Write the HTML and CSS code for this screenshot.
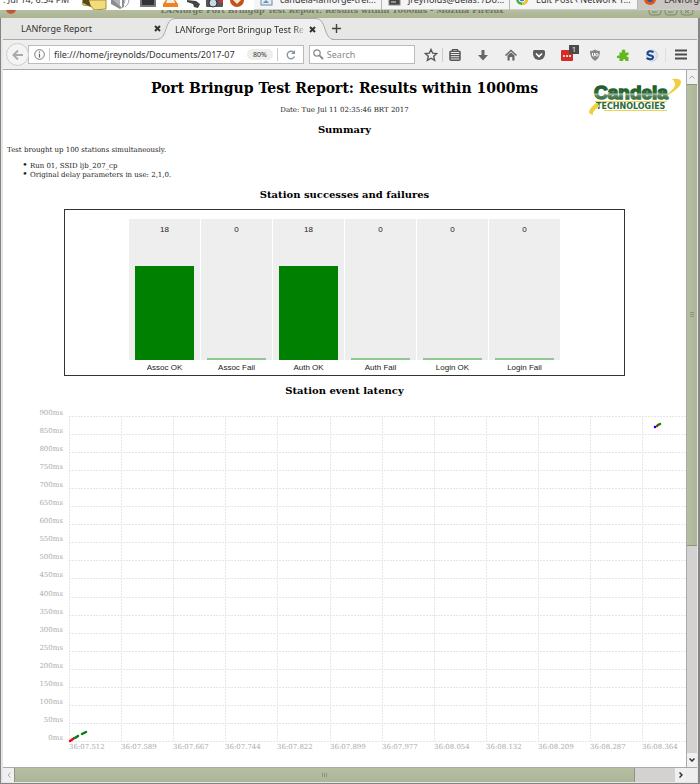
FILE: index.html
```
<!doctype html>
<html lang="en">
	<head>
		<meta charset="utf-8">
		<title>LANforge Port Bringup Test Report</title>
		<link rel="stylesheet" href="styles.css">
	</head>
	<body>

		<div class="panel">
			<div class="clock">: Jul 14, 6:54 PM</div>
			<svg class="tray" width="172" height="10" viewBox="82 0 172 10">
				<path d="M82 0h24v9l-12 1-3-4-8-1z" fill="#f2dc7c" stroke="#a58d3a"/>
				<path d="M83 0v3l8 4-2-7z" fill="#5b4a1c"/>
				<path d="M111 0h4l7 8V0h2v7l-4 2-9-5z" fill="#8c8c8c"/>
				<path d="M113 0h7v6z" fill="#b5b5b5"/>
				<path d="M125 7q4-3 4-7M123 5q2-2 2-5" fill="none" stroke="#93a3b5"/>
				<rect x="140" y="-4" width="16" height="11" rx="1" fill="#777"/>
				<rect x="142" y="-3" width="12" height="8" fill="#303438"/>
				<path d="M166 0h9l3 4v3H163V4z" fill="#f08020"/>
				<path d="M167 0h7l1 3h-9z" fill="#eee"/>
				<path d="M187 0l9 1 4 3-2 4-4-1-1-3-6-2z" fill="#444"/>
				<rect x="206" y="-3" width="17" height="10" rx="1" fill="#555"/>
				<circle cx="213" cy="3" r="4" fill="#c8d8e8" stroke="#333"/>
				<path d="M219 0h4v3h-4z" fill="#c33"/>
				<circle cx="237" cy="0" r="7" fill="#c4501c"/>
				<path d="M233 0l4 4 4-4z" fill="#f4e6d0"/>
			</svg>
			<div class="tasks">
				<button class="task">
					<svg width="14" height="10" viewBox="0 0 14 10"><rect x="1" y="-4" width="11" height="9" fill="#e3edf6" stroke="#6d8bac"/><path d="M3 3l3-3 3 3z" fill="#6d8bac"/></svg>
					<span>candela-lanforge-trel...</span>
				</button>
				<button class="task">
					<svg width="14" height="10" viewBox="0 0 14 10"><rect x="1" y="-4" width="11" height="9" fill="#444" stroke="#888"/><path d="M3 2h5" stroke="#ddd"/></svg>
					<span>jreynolds@delas: /Do...</span>
				</button>
				<button class="task">
					<svg width="14" height="10" viewBox="0 0 14 10"><circle cx="6" cy="-1" r="6" fill="#4cae4f"/><path d="M6-1l6 0a6 6 0 0 1-6 6z" fill="#f4c430"/><circle cx="6" cy="-1" r="3" fill="#3f7fd0" stroke="#fff"/></svg>
					<span>Edit Post ‹ Network T...</span>
				</button>
				<button class="task task-active">
					<svg width="14" height="10" viewBox="0 0 14 10"><circle cx="6" cy="-1" r="6" fill="#d9581c"/><circle cx="6" cy="-1" r="3" fill="#33509c"/></svg>
					<span>LANforge Port</span>
				</button>
			</div>
		</div>

		<div class="titlebar">
			<svg class="title-icon" width="10" height="8" viewBox="0 0 10 8"><circle cx="5" cy="-1" r="5" fill="#d2562a"/><circle cx="5" cy="-2" r="3" fill="#7f5b74"/></svg>
			<div class="title-text">LANforge Port Bringup Test Report: Results within 1000ms - Mozilla Firefox</div>
			<svg class="title-controls" width="48" height="8" viewBox="0 0 48 8" fill="none" stroke="#7f8870">
				<path d="M1 0v2q0 3 3 3h6q3 0 3-3V0M17 0v2q0 3 3 3h6q3 0 3-3V0M33 0v2q0 3 3 3h6q3 0 3-3V0"/>
				<path d="M4 2h5M20 2h5M37 0l4 3M41 0l-4 3"/>
			</svg>
		</div>

		<div class="window">
			<div class="tabs">
				<div class="tab">
					<span class="tab-title">LANforge Report</span>
					<button class="tab-close" aria-label="Close tab"><svg width="7" height="7" viewBox="0 0 7 7"><path d="M1 1l5 5M6 1L1 6"/></svg></button>
				</div>
				<svg class="tab-edge" width="18" height="22" viewBox="0 0 18 22"><path d="M0 21.5C11 21.5 7 .5 18 .5V22H0z" fill="#efefef"/><path d="M0 21.5C11 21.5 7 .5 18 .5" fill="none" stroke="#aaa"/></svg>
				<div class="tab tab-active">
					<span class="tab-title">LANforge Port Bringup Test Report</span>
					<button class="tab-close" aria-label="Close tab"><svg width="7" height="7" viewBox="0 0 7 7"><path d="M1 1l5 5M6 1L1 6"/></svg></button>
				</div>
				<svg width="18" height="22" viewBox="0 0 18 22"><path d="M0 .5C11 .5 7 21.5 18 21.5V22H0z" fill="#efefef"/><path d="M0 .5C11 .5 7 21.5 18 21.5" fill="none" stroke="#aaa"/></svg>
				<div class="tab-rest">
					<button class="tab-new" aria-label="New tab"><svg width="9" height="9" viewBox="0 0 9 9"><path d="M4.5 0v9M0 4.5h9" stroke="#444" stroke-width="1.4"/></svg></button>
				</div>
			</div>

			<div class="toolbar">
				<button class="back" aria-label="Back"><svg width="12" height="12" viewBox="0 0 12 12"><path d="M11 6H2M6 1.5L1.5 6 6 10.5" fill="none" stroke="#aaa" stroke-width="2"/></svg></button>
				<div class="field url">
					<svg width="11" height="11" viewBox="0 0 11 11"><circle cx="5.5" cy="5.5" r="4.8" fill="none" stroke="#777"/><path d="M5.5 2.4v1.4M5.5 4.8v3.6" stroke="#666" stroke-width="1.2"/></svg>
					<span class="divider"></span>
					<input type="text" aria-label="Address" value="file:///home/jreynolds/Documents/2017-07">
					<span class="zoom-level">80%</span>
					<span class="divider"></span>
					<button class="reload" aria-label="Reload"><svg width="10" height="10" viewBox="0 0 10 10"><path d="M8.5 6.5A3.8 3.8 0 1 1 7.7 2.3" fill="none" stroke="#8795ab" stroke-width="1.4"/><path d="M9 0v4H5z" fill="#8795ab"/></svg></button>
				</div>
				<div class="field search">
					<svg width="11" height="11" viewBox="0 0 11 11"><circle cx="4" cy="4" r="3.2" fill="none" stroke="#888" stroke-width="1.2"/><path d="M6.4 6.4L10 10" stroke="#888" stroke-width="1.8"/></svg>
					<input type="text" aria-label="Search" placeholder="Search">
				</div>
				<button class="bookmark" aria-label="Bookmark"><svg width="14" height="14" viewBox="0 0 14 14"><path d="M7 1.5l1.7 3.7 4 .4-3 2.700.9 4L7 10.200l-3.600 2.100.9-4-3-2.700 4-.4z" fill="none" stroke="#555" stroke-width="1.4"/></svg></button>
				<div class="tools">
					<button aria-label="Bookmarks list"><svg width="14" height="14" viewBox="0 0 14 14"><path d="M4.500 3V1.500h5V3" fill="none" stroke="#555" stroke-width="1.2"/><rect x="2" y="3.200" width="10" height="9" rx="1" fill="none" stroke="#555" stroke-width="1.500"/><path d="M2 5.500h10M2 7.700h10M2 9.900h10" stroke="#555" stroke-width="1.200"/></svg></button>
					<button aria-label="Downloads"><svg width="14" height="14" viewBox="0 0 14 14"><path d="M5.500 2h3v5H12l-5 5.500L2 7h3.500z" fill="#666"/></svg></button>
					<button aria-label="Home"><svg width="14" height="14" viewBox="0 0 14 14"><path d="M1.500 7.500L7 2.500l5.500 5" fill="none" stroke="#666" stroke-width="1.500"/><path d="M3.500 7.500L7 4.500l3.500 3v5H8.300V9H5.700v3.500H3.500z" fill="#666"/></svg></button>
					<button aria-label="Pocket"><svg width="14" height="14" viewBox="0 0 14 14"><path d="M1 3.500q0-1.500 1.500-1.500h9Q13 2 13 3.500V6a6 6 0 0 1-12 0z" fill="#5c5c5c"/><path d="M4 5.500l3 3 3-3" fill="none" stroke="#fff" stroke-width="1.700"/></svg></button>
					<button class="with-badge" aria-label="Passwords"><svg width="14" height="14" viewBox="0 0 14 14"><rect x="1" y="2" width="12" height="11" rx="1" fill="#d32d27"/><path d="M3 8h2M6 8h2M9 8h2" stroke="#fff" stroke-width="1.500"/></svg><span class="badge">1</span></button>
					<button aria-label="Blocker"><svg width="14" height="14" viewBox="0 0 14 14"><path d="M7 1.500q2.500 1.500 5 1.500 0 7.500-5 10Q2 10.500 2 3q2.500 0 5-1.500z" fill="#888"/><path d="M4.500 5v2q0 1.200 1 1.200t1-1.200V5" fill="none" stroke="#fff"/><circle cx="8.800" cy="6.800" r="1.300" fill="none" stroke="#fff"/></svg></button>
					<button aria-label="Add-ons"><svg width="14" height="14" viewBox="0 0 14 14"><path d="M6 4.500Q4.800 1.500 7.500 1.500T9 4.500h3.500V7q-2 0-2 1t2 1v4H9.500q-.2-2-1.300-2T7 13H3.500v-3Q1 11 .8 9T3.500 7.500v-3z" fill="#63b71f"/></svg></button>
					<button aria-label="Skype"><svg width="14" height="14" viewBox="0 0 14 14"><circle cx="8" cy="7.500" r="5.500" fill="#dfe5ec" stroke="#c2cad4"/><path d="M9.500 4.300Q8.500 3 6 3.200 3.500 3.500 3.500 5.200T6.500 7.400 9 9.600 6 11.200 2.800 9.800" fill="none" stroke="#17468f" stroke-width="2"/></svg></button>
				</div>
				<button class="menu" aria-label="Menu"><svg width="12" height="11" viewBox="0 0 12 11"><path d="M0 1.500h12M0 5.500h12M0 9.500h12" stroke="#4c4c4c" stroke-width="2"/></svg></button>
			</div>

			<div class="view">
				<div class="view-row">
					<div class="report">
						<div class="report-head">
							<div class="report-title">
								<h1>Port Bringup Test Report: Results within 1000ms</h1>
								<div class="date">Date: Tue Jul 11 02:35:46 BRT 2017</div>
								<h2>Summary</h2>
							</div>
							<svg class="logo" width="94" height="38" viewBox="0 0 94 38">
								<defs>
									<linearGradient id="green" x1="0" y1="0" x2="0" y2="1">
										<stop offset="0" stop-color="#1c5226"/>
										<stop offset=".5" stop-color="#2a6a35"/>
										<stop offset=".58" stop-color="#9cba9e"/>
										<stop offset=".66" stop-color="#55855a"/>
										<stop offset="1" stop-color="#1c5226"/>
									</linearGradient>
								</defs>
								<path d="M84 1q9-1 9 3 0 7-22 18 17-11 16-16 0-3-3-5z" fill="#efd03c"/>
								<text x="6" y="21" class="logo-name" fill="url(#green)" stroke="url(#green)">Candela</text>
								<path d="M7 23.500h72M16 32.500h63" stroke="#ecd25a"/>
								<text x="8" y="31" class="logo-sub">TECHNOLOGIES</text>
								<path d="M8 25q-7 6-7 9 0 2 4 3-2-3 7-9z" fill="#efd03c"/>
							</svg>
						</div>

						<p>Test brought up 100 stations simultaneously.</p>
						<ul>
							<li>Run 01, SSID ljb_207_cp</li>
							<li>Original delay parameters in use: 2,1,0.</li>
						</ul>

						<h2>Station successes and failures</h2>
						<div class="bars">
							<div class="bar-col"><div class="bar-area"><span>18</span><div class="bar" style="height: 68%"></div></div><div>Assoc OK</div></div>
							<div class="bar-col"><div class="bar-area"><span>0</span><div class="bar bar-zero"></div></div><div>Assoc Fail</div></div>
							<div class="bar-col"><div class="bar-area"><span>18</span><div class="bar" style="height: 68%"></div></div><div>Auth OK</div></div>
							<div class="bar-col"><div class="bar-area"><span>0</span><div class="bar bar-zero"></div></div><div>Auth Fail</div></div>
							<div class="bar-col"><div class="bar-area"><span>0</span><div class="bar bar-zero"></div></div><div>Login OK</div></div>
							<div class="bar-col"><div class="bar-area"><span>0</span><div class="bar bar-zero"></div></div><div>Login Fail</div></div>
						</div>

						<h2>Station event latency</h2>
						<svg class="latency" id="latency" width="680" height="360" viewBox="0 0 680 360"></svg>
					</div>

					<div class="vscroll">
						<button aria-label="Scroll up"><svg width="6" height="4" viewBox="0 0 6 4"><path d="M.5 3.500L3 1l2.500 2.500" stroke="#aaa"/></svg></button>
						<div class="vtrack"><div class="vthumb"><svg width="4" height="6" viewBox="0 0 4 6"><path d="M0 .5h4M0 2.500h4M0 4.500h4" stroke="#8e957c"/></svg></div></div>
						<button aria-label="Scroll down"><svg width="6" height="4" viewBox="0 0 6 4"><path d="M.5 .5L3 3 5.500 .5" stroke="#333" stroke-width="1.500"/></svg></button>
					</div>
				</div>
				<div class="hscroll">
					<button aria-label="Scroll left"><svg width="4" height="6" viewBox="0 0 4 6"><path d="M3.500 .5L1 3l2.500 2.500" stroke="#aaa"/></svg></button>
					<div class="htrack"><div class="hthumb"><svg width="6" height="4" viewBox="0 0 6 4"><path d="M.5 0v4M2.500 0v4M4.500 0v4" stroke="#8e957c"/></svg></div></div>
					<button aria-label="Scroll right"><svg width="4" height="6" viewBox="0 0 4 6"><path d="M.5 .5L3 3 .5 5.500" stroke="#333" stroke-width="1.500"/></svg></button>
					<div class="corner"></div>
				</div>
			</div>
		</div>

		<script src="latency.js"></script>
	</body>
</html>
```

FILE: styles.css
```
* {
	box-sizing: border-box;
}

body {
	margin: 0;
	height: 100vh;
	display: flex;
	flex-direction: column;
	overflow: hidden;
	font-family: "Noto Sans", sans-serif;
	font-size: 9px;
	color: #333;
	background: #fff;
}

button {
	padding: 0;
	border: 0;
	background: none;
	font: inherit;
	color: inherit;
	display: flex;
	align-items: center;
	justify-content: center;
}

svg {
	display: block;
	flex: none;
}

/* DESKTOP PANEL */
.panel {
	height: 10px;
	flex: none;
	display: flex;
	overflow: hidden;
	background: #fff;
}

.clock {
	width: 82px;
	padding-left: 3px;
	line-height: 12px;
	margin-top: -6px;
	white-space: nowrap;
}

.tasks {
	flex: 1;
	min-width: 0;
	display: flex;
	overflow: hidden;
}

.task {
	flex: none;
	width: 128px;
	height: 10px;
	padding: 0 6px;
	gap: 6px;
	justify-content: flex-start;
	align-items: flex-start;
	border-right: 1px solid #b5b5b5;
	border-bottom: 1px solid #ccc;
	background: #f5f5f5;
	white-space: nowrap;
}

.task span {
	line-height: 12px;
	margin-top: -6px;
}

.task-active {
	background: #c9c6c3;
}

/* TITLE BAR */
.titlebar {
	height: 8px;
	flex: none;
	display: flex;
	justify-content: space-between;
	padding: 0 4px 0 6px;
	overflow: hidden;
	background: linear-gradient(#b5bea0, #a9b391);
}

.title-text {
	font: bold 8px/10px "DejaVu Serif", serif;
	color: #6d7460;
	margin-top: -5px;
	white-space: nowrap;
}

.window {
	flex: 1;
	min-height: 0;
	display: flex;
	flex-direction: column;
	border: 1px solid #858585;
	border-top: 0;
	border-right-width: 2px;
	padding: 0 1px 1px 2px;
	background: #e6e6e4;
}

/* TABS */
.tabs {
	display: flex;
	height: 22px;
	flex: none;
	background: #e7e7e6;
}

.tab {
	flex: none;
	width: 158px;
	display: flex;
	align-items: center;
	gap: 4px;
	padding-left: 18px;
	border-bottom: 1px solid #aaa;
}

.tab-edge {
	margin-left: -4px;
}

.tab-active {
	width: 141px;
	padding-left: 0;
	border-top: 1px solid #aaa;
	border-bottom: 0;
	background: #efefef;
}

.tab-title {
	flex: 1;
	overflow: hidden;
	white-space: nowrap;
}

.tab-active .tab-title {
	-webkit-mask-image: linear-gradient(to left, transparent, #000 10px);
	mask-image: linear-gradient(to left, transparent, #000 10px);
}

.tab-close path {
	stroke: #333;
	stroke-width: 2;
}

.tab-rest {
	flex: 1;
	display: flex;
	margin-left: -2px;
	border-bottom: 1px solid #aaa;
}

/* TOOLBAR */
.toolbar {
	display: flex;
	align-items: center;
	height: 30px;
	flex: none;
	padding: 0 10px 0 3px;
	background: #efefef;
	border-bottom: 1px solid #aaa;
}

.back {
	width: 23px;
	height: 23px;
	flex: none;
	border: 1px solid #ccc;
	border-radius: 50%;
	background: #f4f4f4;
	z-index: 1;
}

.field {
	min-width: 0;
	height: 19px;
	display: flex;
	align-items: center;
	border: 1px solid #bbb;
	background: #fff;
}

.field input {
	flex: 1;
	min-width: 0;
	padding: 0;
	border: 0;
	outline: 0;
	background: none;
	font: inherit;
	color: #333;
}

.field input::placeholder {
	color: #888;
}

.url {
	flex: 8;
	margin-left: -1px;
	padding: 0 7px 0 5px;
	gap: 4px;
}

.divider {
	width: 1px;
	height: 13px;
	background: #ccc;
}

.zoom-level {
	padding: 0 6px;
	border-radius: 6px;
	background: #eee;
	font-size: 7px;
	line-height: 11px;
}

.reload {
	margin-left: 4px;
}

.search {
	flex: 3;
	margin: 0 9px 0 5px;
	padding: 0 3px;
	gap: 3px;
}

.bookmark {
	padding-right: 4px;
	margin-right: 5px;
	border-right: 1px solid #ccc;
}

.tools {
	display: flex;
	gap: 14px;
	padding-right: 7px;
	border-right: 1px solid #ddd;
}

.with-badge {
	position: relative;
}

.badge {
	position: absolute;
	top: -3px;
	right: -5px;
	width: 10px;
	background: #4a4a4a;
	color: #fff;
	font-size: 7px;
	line-height: 9px;
}

.menu {
	margin-left: 9px;
}

/* REPORT */
.view {
	flex: 1;
	min-height: 0;
	display: flex;
	flex-direction: column;
}

.view-row {
	flex: 1;
	min-height: 0;
	display: flex;
}

.report {
	flex: 1;
	min-width: 0;
	overflow: hidden;
	padding: 8px 4px 0;
	background: #fff;
	color: #222;
	font: 7px/9px "DejaVu Serif", serif;
}

.report-head {
	display: grid;
	grid-template-columns: 1fr auto 1fr;
}

.report-title {
	grid-column: 2;
	text-align: center;
}

h1 {
	margin: 2px 0 10px;
	font-size: 14px;
	line-height: 16px;
	color: #000;
}

h2 {
	margin: 8px 0;
	font-size: 10px;
	line-height: 13px;
	text-align: center;
	color: #000;
}

.report p {
	margin: 2px 0 7px;
}

.report ul {
	margin: 0;
	padding-left: 15px;
	list-style: none;
}

.report li::before {
	content: "•";
	margin-right: 2px;
	font-size: 10px;
	line-height: 0;
}

.logo {
	justify-self: end;
}

.logo-name {
	font: bold 19px "Liberation Sans", sans-serif;
	stroke-width: 1.5;
}

.logo-sub {
	font: bold 8px "DejaVu Sans", sans-serif;
	fill: #2a6a35;
}

.bars {
	display: flex;
	justify-content: center;
	gap: 1px;
	width: 83%;
	margin: 0 auto;
	padding-top: 9px;
	border: 1px solid #333;
	font: 8px/15px "Liberation Sans", sans-serif;
	text-align: center;
}

.bar-col {
	flex: none;
	width: 71px;
}

.bar-area {
	display: flex;
	flex-direction: column;
	justify-content: space-between;
	height: 141px;
	padding: 3px 6px 0;
	background: #eee;
}

.bar {
	background: green;
}

.bar-zero {
	height: 2px;
	background: #90c890;
}

.latency {
	font: 7px "DejaVu Serif", serif;
	fill: #aaa;
}

.latency .grid {
	stroke: #e6e6e6;
	stroke-dasharray: 2 1;
}

/* SCROLLBARS */
.vscroll {
	width: 11px;
	flex: none;
	display: flex;
	flex-direction: column;
	border-left: 1px solid #aaa;
}

.vscroll button {
	height: 14px;
	background: #f0f0f0;
}

.vscroll path, .hscroll path {
	fill: none;
}

.vtrack {
	flex: 1;
	background: #d4d2d0;
}

.vthumb {
	height: 69%;
	display: flex;
	align-items: center;
	justify-content: center;
	background: linear-gradient(to right, #b6bfa2, #adb598);
	border-top: 1px solid #8e957c;
	border-bottom: 1px solid #8e957c;
}

.hscroll {
	height: 15px;
	flex: none;
	display: flex;
	border-top: 1px solid #aaa;
}

.hscroll button {
	width: 11px;
	background: #f0f0f0;
}

.htrack {
	flex: 1;
	background: #d4d2d0;
}

.hthumb {
	width: 94%;
	height: 100%;
	display: flex;
	align-items: center;
	justify-content: center;
	background: linear-gradient(#b6bfa2, #adb598);
	border-left: 1px solid #8e957c;
	border-right: 1px solid #8e957c;
}

.corner {
	width: 11px;
	background: #eee;
}
```

FILE: latency.js
```
var svg = document.getElementById('latency');
var times = ['36:07.512', '36:07.589', '36:07.667', '36:07.744', '36:07.822', '36:07.899',
	'36:07.977', '36:08.054', '36:08.132', '36:08.209', '36:08.287', '36:08.364'];
var left = 62, top0 = 11, stepX = 52.1, stepY = 18.05;
var bottom = Math.round(top0 + 18 * stepY);

function add(name, attrs, text) {
	var el = document.createElementNS('http://www.w3.org/2000/svg', name);
	for (var key in attrs) {
		el.setAttribute(key, attrs[key]);
	}
	if (text) {
		el.textContent = text;
	}
	svg.appendChild(el);
}

function line(x1, y1, x2, y2, color) {
	add('line', { x1: x1, y1: y1, x2: x2, y2: y2, stroke: color, 'stroke-width': 2.5, 'stroke-linecap': 'round' });
}

// horizontal lines, one per 50ms
for (var i = 0; i <= 18; i++) {
	var y = Math.round(top0 + i * stepY);
	add('line', { 'class': 'grid', x1: left, y1: y + 0.5, x2: 680, y2: y + 0.5 });
	add('text', { x: left - 6, y: y - 1, 'text-anchor': 'end' }, (900 - i * 50) + 'ms');
}

// vertical lines, one per time stamp
times.forEach(function (time, i) {
	var x = Math.round(left + i * stepX);
	add('line', { 'class': 'grid', x1: x + 0.5, y1: top0, x2: x + 0.5, y2: bottom });
	add('text', { x: x, y: bottom + 8 }, time);
});

// station events
line(63, bottom, 66, bottom - 2, 'red');
line(68, bottom - 3, 71, bottom - 5, 'green');
line(67, bottom - 3, 67, bottom - 3, '#555588');
line(75, bottom - 7, 79, bottom - 9, 'green');
line(648, top0 + 11, 648, top0 + 11, 'blue');
line(650, top0 + 10, 650, top0 + 10, 'red');
line(651, top0 + 9, 653, top0 + 8, 'green');
```
